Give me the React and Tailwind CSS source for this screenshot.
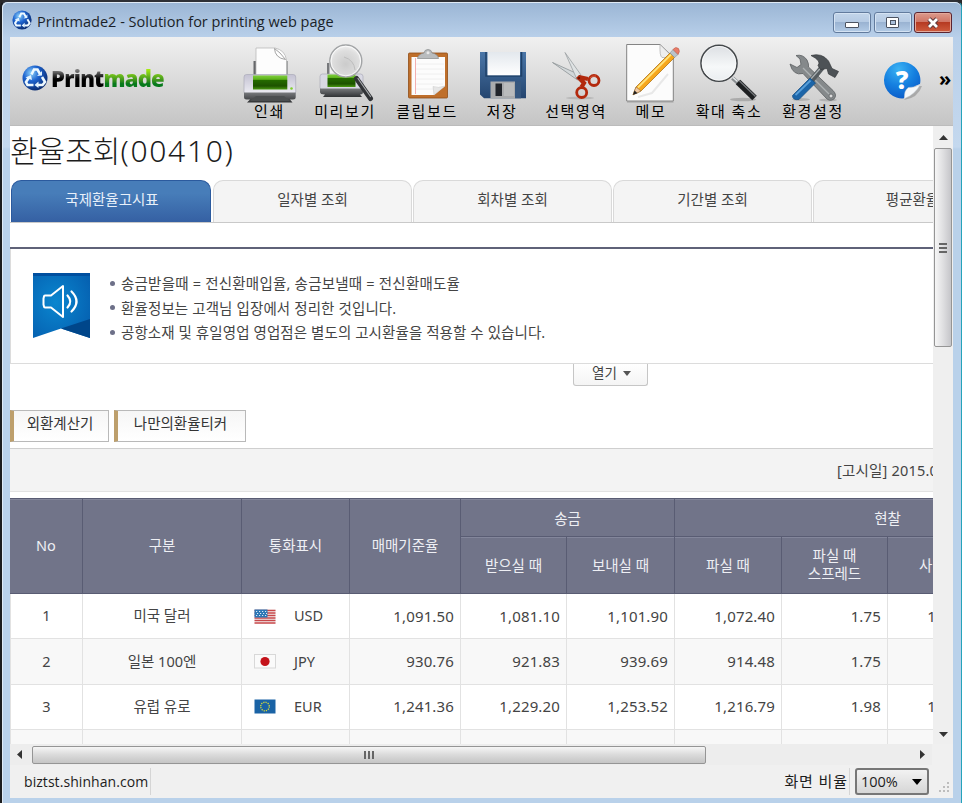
import React from "react";

const K = "font-['Noto_Sans','Noto_Sans_CJK_KR',sans-serif]";

function Globe({ size }) {
  return (
    <svg width={size} height={size} viewBox="0 0 26 26" className="block shrink-0">
      <defs>
        <radialGradient id={"globe" + size} cx="0.35" cy="0.3" r="0.8">
          <stop offset="0" stopColor="#8fd4fb" />
          <stop offset="0.4" stopColor="#1d63cf" />
          <stop offset="1" stopColor="#06215f" />
        </radialGradient>
      </defs>
      <circle cx="13" cy="13" r="12.5" fill={"url(#globe" + size + ")"} />
      <path d="M9.5 9.5 L12 4.5 H15.5 L18 9 M20 12 L23 17 L20.5 20 H16 M11.5 20 H5.5 L4 17 L7 12.5" fill="none" stroke="#eef9ff" strokeWidth="2.6" />
      <path d="M15 11 L20 10.5 L20 6 Z M16.5 16.5 V23 L12.5 20 Z M3.5 12.5 L9 10 L10 15 Z" fill="#e2f3ff" />
    </svg>
  );
}

function Icon({ box, children }) {
  return (
    <svg width="60" height="62" viewBox={box} className="block shrink-0">
      {children}
    </svg>
  );
}

function PrinterIcon() {
  return (
    <Icon box="240 42 60 62">
      <defs>
        <linearGradient id="prBody" x2="0" y2="1"><stop offset="0" stopColor="#c4c2d2" /><stop offset="1" stopColor="#efeff5" /></linearGradient>
        <linearGradient id="prGreen" x2="0" y2="1"><stop offset="0" stopColor="#7ed03a" /><stop offset="0.28" stopColor="#5cb01c" /><stop offset="0.32" stopColor="#256c00" /><stop offset="0.75" stopColor="#1d5200" /><stop offset="1" stopColor="#4a9a12" /></linearGradient>
        <linearGradient id="prBase" x2="0" y2="1"><stop offset="0" stopColor="#77797c" /><stop offset="1" stopColor="#303234" /></linearGradient>
      </defs>
      <path d="M254.5 75 V61 H258 V75 Z M285.5 75 V61 H288.5 V75 Z" fill="#66686b" />
      <path d="M257 48 H276 Q286 50 287.5 60 V76 H257 Z" fill="#fdfdfd" stroke="#b9b9b9" strokeWidth="0.8" />
      <path d="M275.5 48.5 Q276 58 286.5 59.5 Q281 52 275.5 48.5 Z" fill="#fff" stroke="#999" strokeWidth="0.9" />
      <rect x="245" y="74.5" width="51.7" height="20" rx="2.5" fill="url(#prBody)" stroke="#a5a5b3" strokeWidth="0.6" />
      <rect x="254" y="75.5" width="34.3" height="14" fill="url(#prGreen)" />
      <circle cx="292.5" cy="88.5" r="1.3" fill="#7fd02b" />
      <path d="M245 92.5 H296.7 V97 Q296.7 99.5 294 99.5 H291 L293.5 102.5 H248 L251 99.5 H247.5 Q245 99.5 245 97 Z" fill="url(#prBase)" />
      <path d="M257 96 H285 L291 101 H251 Z" fill="#4b4e50" />
    </Icon>
  );
}

function PreviewIcon() {
  return (
    <Icon box="315 42 60 62">
      <defs>
        <radialGradient id="pvLens" cx="0.5" cy="0.6" r="0.6"><stop offset="0" stopColor="#cbcbcb" /><stop offset="0.7" stopColor="#dedede" /><stop offset="1" stopColor="#f2f2f2" /></radialGradient>
      </defs>
      <path d="M327 75 V63 H330 V75 Z" fill="#77797c" />
      <rect x="329.5" y="56" width="25" height="22" fill="#f4f4f4" />
      <rect x="320" y="74" width="43" height="16" rx="2.5" fill="#d9d9e4" stroke="#a5a5b3" strokeWidth="0.6" />
      <rect x="327.5" y="74.5" width="28" height="12.5" fill="url(#prGreen)" />
      <path d="M320 88.5 H363 V92 Q363 94.5 360 94.5 L362 97 H323 L325 94.5 Q320 94.5 320 92 Z" fill="url(#prBase)" />
      <path d="M356.5 78.5 L370.5 98.5" stroke="#323437" strokeWidth="5" strokeLinecap="round" />
      <path d="M358 78.5 L370.5 96.5" stroke="#a8abae" strokeWidth="1.2" strokeLinecap="round" />
      <circle cx="345.8" cy="61" r="16" fill="url(#pvLens)" stroke="#a2a4a6" strokeWidth="1.4" />
      <path d="M344 57 Q354 60 355 70" fill="none" stroke="#bdbdbd" />
      <circle cx="345.8" cy="61" r="14.8" fill="none" stroke="#fff" strokeWidth="0.8" />
    </Icon>
  );
}

function ClipboardIcon() {
  return (
    <Icon box="397 42 60 62">
      <rect x="408.5" y="53" width="39" height="45" rx="1" fill="#bf6f2b" stroke="#8f4d17" strokeWidth="0.8" />
      <path d="M411.5 57 H445 V86 L434 95 H411.5 Z" fill="#fcfcfc" />
      <path d="M415.5 58 V94" stroke="#f2a6a6" strokeWidth="0.9" />
      <path d="M416 64 H444 M416 69 H444 M416 74 H444 M416 79 H444 M416 84 H443 M416 89 H436" stroke="#ececec" strokeWidth="0.8" />
      <path d="M445 86 L434 95 L433 86.5 Q438 88.5 445 86 Z" fill="#e6e6e6" stroke="#c4c4c4" strokeWidth="0.5" />
      <path d="M417.5 58.5 Q418 54 424 53 Q424.5 49.5 428 49.5 Q431.5 49.5 432 53 Q438 54 438.5 58.5 Z" fill="#b9bcbe" stroke="#85888a" strokeWidth="0.7" />
      <circle cx="428" cy="52.8" r="1.5" fill="#e8e8e8" />
    </Icon>
  );
}

function SaveIcon() {
  return (
    <Icon box="472 42 60 62">
      <defs>
        <linearGradient id="fdBlue" x2="0" y2="1"><stop offset="0" stopColor="#4a76a8" /><stop offset="1" stopColor="#24456f" /></linearGradient>
        <linearGradient id="fdLabel" x2="0" y2="1"><stop offset="0" stopColor="#e3e8ed" /><stop offset="1" stopColor="#fff" /></linearGradient>
      </defs>
      <path d="M480 52 H526 V98.3 H484 L480 94.5 Z" fill="url(#fdBlue)" />
      <path d="M486 52 V76 H521.5 V52" fill="none" stroke="#1f4169" strokeWidth="1.5" />
      <rect x="487.5" y="52" width="32.5" height="23.3" fill="url(#fdLabel)" />
      <rect x="490.5" y="81.5" width="24.5" height="16.8" fill="#a9abad" />
      <rect x="515" y="81.5" width="6" height="16.8" fill="#35577f" />
      <rect x="495.5" y="83.5" width="6.5" height="12.5" fill="#20242a" />
      <path d="M504 83 H514 V96 H504 Z" fill="#b9bbbc" />
    </Icon>
  );
}

function ScissorsIcon() {
  return (
    <Icon box="546 42 60 62">
      <ellipse cx="580" cy="98" rx="14" ry="1.5" fill="#000" opacity="0.12" />
      <path d="M552.5 62.5 L580 75 L577.5 80 Z" fill="#d3d8da" stroke="#8d9395" strokeWidth="0.8" />
      <path d="M565 52.5 L581 75 L577 79.5 Z" fill="#dfe3e4" stroke="#9ba0a2" strokeWidth="0.8" />
      <path d="M577.5 76.5 L584 83 L581.5 87 M579 77 L588 79" fill="none" stroke="#b3290d" strokeWidth="4.2" />
      <circle cx="594" cy="80.5" r="5" fill="none" stroke="#b3290d" strokeWidth="2.8" />
      <circle cx="581.7" cy="92.5" r="5" fill="none" stroke="#b3290d" strokeWidth="2.8" />
      <circle cx="579" cy="78" r="1.2" fill="#6b1a0a" />
      <path d="M590 78 Q592 75.5 596 76" fill="none" stroke="#e1674d" strokeWidth="0.8" />
    </Icon>
  );
}

function MemoIcon() {
  return (
    <Icon box="621 42 60 62">
      <path d="M626.7 44.5 H660 L673.3 57 V101 H626.7 Z" fill="#fcfcfc" stroke="#777" strokeWidth="0.9" />
      <path d="M627 102 H673.5" stroke="#8f8f8f" strokeWidth="0.7" />
      <path d="M660 44.5 Q659.5 56 662 57.5 L673 57.3 Z" fill="#eee" stroke="#aaa" strokeWidth="0.7" />
      <path d="M638 97 L652 93 L668 74" stroke="#000" strokeWidth="2" opacity="0.08" fill="none" />
      <path d="M633 94.8 L636 87 L670 53 L674.5 57.5 L641 91 Z" fill="#f7a71c" stroke="#a66808" strokeWidth="0.7" />
      <path d="M638 87.5 L671 54.5" stroke="#ffe37c" strokeWidth="1.8" />
      <path d="M633 94.8 L636 87 L641 91 Z" fill="#f0c9a2" stroke="#8a6642" strokeWidth="0.5" />
      <path d="M633 94.8 L634.5 90.5 L637.5 93.2 Z" fill="#222" />
      <path d="M670 53 L673 49.5 L678 54.5 L674.500 57.5 Z" fill="#b9c3cb" stroke="#7c868d" strokeWidth="0.5" />
      <path d="M673 49.5 Q675.500 46 678.500 48.500 Q680.500 51.5 678 54.5 Z" fill="#e97d69" stroke="#b65340" strokeWidth="0.5" />
    </Icon>
  );
}

function ZoomIcon() {
  return (
    <Icon box="699 42 60 62">
      <defs>
        <linearGradient id="zmLens" x2="0" y2="1"><stop offset="0" stopColor="#dcdfe3" /><stop offset="0.6" stopColor="#f6f8f9" /><stop offset="1" stopColor="#e9edf0" /></linearGradient>
      </defs>
      <ellipse cx="743" cy="99.5" rx="13" ry="1.8" fill="#000" opacity="0.18" />
      <path d="M732.5 78 L738 83" stroke="#8a8e91" strokeWidth="4" />
      <path d="M733 77.5 L737.5 81.5" stroke="#e9edef" strokeWidth="1.4" />
      <path d="M738 82 L754.5 98" stroke="#1d1f21" strokeWidth="6.5" />
      <path d="M739.5 81 L755.5 96.5" stroke="#74787b" strokeWidth="1.3" />
      <circle cx="719" cy="63.3" r="18" fill="url(#zmLens)" stroke="#44484b" strokeWidth="1.6" />
      <circle cx="719" cy="63.3" r="16.8" fill="none" stroke="#fafafa" strokeWidth="0.8" />
    </Icon>
  );
}

function ToolsIcon() {
  return (
    <Icon box="783 42 60 62">
      <ellipse cx="801" cy="99.5" rx="9" ry="1.5" fill="#000" opacity="0.15" />
      <ellipse cx="828" cy="100" rx="9" ry="1.5" fill="#000" opacity="0.15" />
      <path d="M790 64 L797 67.5 L801 64.5 L800 59 L796 55.5 Q803 54 807 60 Q809 64 808.5 67 L833 90.5 Q837.5 95 834 99 Q829.5 102 826 98 L803 73.5 Q793 76 790 64 Z" fill="#85898b" stroke="#5c6062" strokeWidth="0.8" />
      <path d="M803 68 L829 94" stroke="#aeb2b3" strokeWidth="1.3" />
      <circle cx="831" cy="96" r="2" fill="#dcdcdc" stroke="#606366" strokeWidth="0.8" />
      <path d="M811 81 L822.5 67" stroke="#555b5f" strokeWidth="5.5" />
      <path d="M810 80 L821.5 67" stroke="#a9afb2" strokeWidth="1.2" />
      <path d="M811 55.5 Q822 52.5 828.5 61 L832 68.5 L838.5 71.5 L835 77.5 L828.5 74 L827 68.5 L820.5 69.5 L818 65.5 Q822 61 811 55.5 Z" fill="#4d5256" stroke="#36393c" strokeWidth="0.7" />
      <path d="M792.5 95.5 L810 78 L815.5 83 L799 99.5 Q792.5 100.5 792.5 95.5 Z" fill="#1c65a8" stroke="#124a80" strokeWidth="0.7" />
      <path d="M795.5 95 L810.5 80.5" stroke="#589ed8" strokeWidth="1.8" />
    </Icon>
  );
}

function HelpIcon() {
  return (
    <svg width="42" height="42" viewBox="882 60 42 42" className="block shrink-0">
      <defs>
        <radialGradient id="helpBlue" cx="0.4" cy="0.2" r="0.9"><stop offset="0" stopColor="#3bb2f3" /><stop offset="0.5" stopColor="#1580e0" /><stop offset="1" stopColor="#0a55c4" /></radialGradient>
      </defs>
      <path d="M904 100 Q918 98 922 86 L915 86 Z" fill="#000" opacity="0.2" />
      <path d="M920 84 A18.200 18.200 0 1 0 904 98.300 Q907 88 920 84 Z" fill="url(#helpBlue)" />
      <path d="M920.300 84.500 Q915 94.500 904.500 98.500 Q904 90 908.500 87.500 Q914 88 920.300 84.500 Z" fill="#f6f8fa" stroke="#c4ccd4" strokeWidth="0.5" />
      <text x="902" y="88.5" textAnchor="middle" className="font-['Open_Sans',sans-serif] font-extrabold" fontSize="25" fill="#fff">?</text>
    </svg>
  );
}

const tools = [
  [PrinterIcon, "인쇄", "w-[76px]"],
  [PreviewIcon, "미리보기", "w-[75px]"],
  [ClipboardIcon, "클립보드", "w-[89px]"],
  [SaveIcon, "저장", "w-[61px]"],
  [ScissorsIcon, "선택영역", "w-[87px]"],
  [MemoIcon, "메모", "w-[63px]"],
  [ZoomIcon, "확대 축소", "w-[93px]"],
  [ToolsIcon, "환경설정", "w-[75px]"],
];

function WindowButton({ close, children }) {
  return (
    <div className={"flex h-[21px] w-[38px] items-center justify-center rounded-[3px] border " + (close
      ? "border-[#5b2430] bg-[linear-gradient(#dc9a8c_0%,#cf7464_48%,#b63a22_50%,#cf5c3e_100%)] shadow-[inset_0_0_0_1px_#e3a99b]"
      : "border-[#627b9d] bg-[linear-gradient(#c3d5ea_0%,#b5cae3_48%,#9ab3d2_50%,#b3cbe6_100%)] shadow-[inset_0_0_0_1px_#d5e3f3]")}>
      {children}
    </div>
  );
}

function TitleBar() {
  return (
    <div className="flex h-[34px] shrink-0 items-center pl-[9px] pr-[8px]">
      <Globe size={20} />
      <div className="ml-[5px] mt-[3px] whitespace-nowrap font-['Open_Sans',sans-serif] text-[14.5px] tracking-[0.02px] text-[#1a1f28]">Printmade2 - Solution for printing web page</div>
      <div className="ml-auto mt-[5px] flex gap-[2.5px] pr-[1px]">
        <WindowButton>
          <div className="mt-[4px] h-[6px] w-[14px] rounded-[1px] border border-[#4c5361] bg-white" />
        </WindowButton>
        <WindowButton>
          <div className="flex h-[11px] w-[13px] items-center justify-center rounded-[1px] border border-[#4c5361] bg-white">
            <div className="h-[5px] w-[6px] border border-[#4c5361] bg-[#a9bfda]" />
          </div>
        </WindowButton>
        <WindowButton close>
          <svg width="14" height="12" viewBox="0 0 14 12"><path d="M3 2 L11 10 M11 2 L3 10" stroke="#5c3a3d" strokeWidth="4.6" /><path d="M3 2 L11 10 M11 2 L3 10" stroke="#fff" strokeWidth="2.8" /></svg>
        </WindowButton>
      </div>
    </div>
  );
}

function Toolbar() {
  return (
    <div className="flex h-[89px] shrink-0 border-b border-[#bcbcbc] bg-gradient-to-b from-[#f0f0f0] to-[#c5c5c5]">
      <div className="flex w-[221px] shrink-0 items-center pb-[6px] pl-[12px]">
        <Globe size={26} />
        <div className="ml-[3px] flex font-['Open_Sans',sans-serif] text-[22px] font-extrabold leading-[28px] tracking-[-0.75px]">
          <span className="bg-gradient-to-b from-[#777] from-25% to-black to-60% bg-clip-text text-transparent">Print</span>
          <span className="bg-gradient-to-b from-[#a4ea10] from-20% to-[#077a1c] to-70% bg-clip-text text-transparent">made</span>
        </div>
      </div>
      {tools.map(([Glyph, label, w]) => (
        <div key={label} className={"flex shrink-0 flex-col items-center pt-[5px] " + w}>
          <Glyph />
          <div className="-mt-[2px] whitespace-nowrap pl-px font-['Noto_Sans_CJK_KR',sans-serif] text-[15px] leading-[18px] tracking-[1.6px] text-black">{label}</div>
        </div>
      ))}
      <div className="ml-[32px] flex items-center pb-[1px]"><HelpIcon /></div>
      <div className="ml-[15px] mt-[31px] font-['Noto_Sans',sans-serif] text-[20px] font-bold leading-[22px] text-black">»</div>
    </div>
  );
}

function Tab({ children, active }) {
  return (
    <div className={"flex h-[42px] shrink-0 items-center justify-center rounded-t-[10px] border border-b-0 pb-[3px] text-[14.5px] " + (active
      ? "mr-[2px] w-[200px] border-[#2b5a9e] bg-gradient-to-b from-[#477db9] from-30% to-[#3560a3] pl-[2px] text-[#e8f0fa]"
      : "mr-px w-[199px] border-[#d9d9d9] bg-[#f4f4f4] text-[#444]")}>
      {children}
    </div>
  );
}

const notices = [
  ["송금받을때 = 전신환매입율, 송금보낼때 = 전신환매도율", "tracking-[0.21px]"],
  ["환율정보는 고객님 입장에서 정리한 것입니다.", "tracking-[0.12px]"],
  ["공항소재 및 휴일영업 영업점은 별도의 고시환율을 적용할 수 있습니다.", "tracking-[0.09px]"],
];

function Notice() {
  return (
    <div className="flex h-[115px] shrink-0 border-b border-l border-[#dcdcdc] pl-[22px] pt-[24px]">
      <svg width="57" height="66" viewBox="0 0 57 66" className="block shrink-0">
        <defs>
          <radialGradient id="flagBlue" cx="0.4" cy="0.45" r="0.7"><stop offset="0" stopColor="#0a86cf" /><stop offset="1" stopColor="#0560b0" /></radialGradient>
        </defs>
        <path d="M0 0 H57 V65 L28 55.5 L0 65 Z" fill="url(#flagBlue)" />
        <path d="M57 46 L28 55.5 L57 65 Z" fill="#00468a" />
        <path d="M0 0 H57 V3 H0 Z" fill="#004f9f" />
        <path d="M11 23.5 Q11 22.5 12 22.5 H18 L30 13 V44 L18 34.5 H12 Q11 34.5 11 33.5 L10.5 31.5 V25.5 Z" fill="none" stroke="#fff" strokeWidth="2" strokeLinejoin="round" />
        <path d="M34.5 22.5 Q40 28.5 34.5 34.5 M38.5 18.5 Q48.500 28.5 38.500 38.500" fill="none" stroke="#fff" strokeWidth="2.2" strokeLinecap="round" />
      </svg>
      <ul className="-mt-[2px] ml-[20px] text-[14.5px] leading-[24.5px] text-[#444]">
        {notices.map(([line, spacing]) => (
          <li key={line} className={"flex items-center whitespace-nowrap " + spacing}>
            <span className="mr-[6px] size-[5px] rounded-full bg-[#6d7088]" />
            {line}
          </li>
        ))}
      </ul>
    </div>
  );
}

function Flag({ code }) {
  return (
    <svg width="22" height="15" viewBox="0 0 22 15" className="block shrink-0">
      {code === "USD" && (
        <>
          <rect x="0.5" y="0.5" width="21" height="14" fill="#f3f1f1" />
          <path d="M0.5 1.5 H21.5 M0.5 4 H21.5 M0.5 6.5 H21.5 M0.5 9 H21.5 M0.5 11.5 H21.5 M0.5 14 H21.5" stroke="#c8474a" strokeWidth="1.3" />
          <rect x="0.5" y="0.5" width="13" height="8" fill="#2c76b5" />
          <path d="M2 2.5 H13 M3 4.5 H13 M2 6.5 H13" stroke="#d7e7f5" strokeWidth="1" strokeDasharray="1.2 1.8" />
        </>
      )}
      {code === "JPY" && (
        <>
          <rect x="0.5" y="0.5" width="21" height="13.5" fill="#fafafa" stroke="#d8d8d8" />
          <circle cx="11" cy="7.5" r="4.6" fill="#c4121a" />
        </>
      )}
      {code === "EUR" && (
        <>
          <rect x="0.5" y="0.5" width="21" height="14" fill="#1a63a5" />
          <circle cx="11" cy="7.5" r="4.3" fill="none" stroke="#d7dc3a" strokeWidth="1.3" strokeDasharray="1.2 1.05" />
        </>
      )}
    </svg>
  );
}

const rows = [
  ["1", "미국 달러", "USD", "1,091.50", "1,081.10", "1,101.90", "1,072.40", "1.75", "1,110.60", ""],
  ["2", "일본 100엔", "JPY", "930.76", "921.83", "939.69", "914.48", "1.75", "947.04", ""],
  ["3", "유럽 유로", "EUR", "1,241.36", "1,229.20", "1,253.52", "1,216.79", "1.98", "1,265.93", ""],
  ["", "", "", "", "", "", "", "", "", ""],
];

const th = "border-r border-b border-[#595c73] p-0 font-normal shadow-[inset_0_1px_0_#83869b]";

function RateTable() {
  return (
    <table className="w-[1091px] table-fixed border-separate border-spacing-0 text-[#444]">
      <colgroup>
        <col className="w-[73px]" /><col className="w-[159px]" /><col className="w-[108px]" /><col className="w-[111px]" /><col className="w-[106px]" />
        <col className="w-[108px]" /><col className="w-[107px]" /><col className="w-[106px]" /><col className="w-[107px]" /><col className="w-[106px]" />
      </colgroup>
      <thead className="bg-[#717489] text-[14.5px] leading-[18px] text-[#eeeff4]">
        <tr className="h-[39px]">
          <th rowSpan="2" className={th + " border-t pb-[2px]"}>No</th>
          <th rowSpan="2" className={th + " border-t pb-[2px]"}>구분</th>
          <th rowSpan="2" className={th + " border-t pb-[2px]"}>통화표시</th>
          <th rowSpan="2" className={th + " border-t pb-[2px]"}>매매기준율</th>
          <th colSpan="2" className={th + " border-t"}>송금</th>
          <th colSpan="4" className={th + " border-t"}>현찰</th>
        </tr>
        <tr className="h-[57px]">
          <th className={th}>받으실 때</th>
          <th className={th}>보내실 때</th>
          <th className={th}>파실 때</th>
          <th className={th + " pb-[2px]"}>파실 때<br />스프레드</th>
          <th className={th}>사실 때</th>
          <th className={th} />
        </tr>
      </thead>
      <tbody>
        {rows.map((r, i) => (
          <tr key={i} className={"h-[45.3px] text-[14.5px] " + (i % 2 ? "bg-[#f8f8f8]" : "bg-white")}>
            {r.map((v, j) => (
              <td key={j} className={"border-r border-b border-[#e2e2e2] p-0 " + (j === 0 ? "border-l text-center" : j === 1 ? "text-center" : j === 2 ? "pl-[12px]" : "pr-[6px] text-right text-[15px] tracking-[0.15px]")}>
                {j === 2 && v ? <div className="flex items-center"><Flag code={v} /><span className="ml-[18px]">{v}</span></div> : v}
              </td>
            ))}
          </tr>
        ))}
      </tbody>
    </table>
  );
}

function Page() {
  return (
    <div className={"flex w-[923px] flex-col overflow-hidden bg-white " + K}>
      <h1 className="h-[54px] shrink-0 whitespace-nowrap text-[30px] font-light leading-[50px] text-[#1c1c1c]">환율조회<span className="tracking-[1.7px]">(00410)</span></h1>
      <div className="flex h-[43px] shrink-0 border-b border-[#c9c9c9] pl-px">
        <Tab active>국제환율고시표</Tab>
        <Tab>일자별 조회</Tab>
        <Tab>회차별 조회</Tab>
        <Tab>기간별 조회</Tab>
        <Tab>평균환율</Tab>
      </div>
      <div className="h-[26px] shrink-0 border-b-2 border-[#5f6278]" />
      <Notice />
      <div className="ml-[563px] flex h-[22px] w-[75px] shrink-0 items-center justify-center gap-[6px] rounded-b-[3px] border border-t-0 border-[#c6c6c6] bg-gradient-to-b from-white to-[#f4f4f4] pb-[2px] pl-[2px] text-[13.5px] text-[#444]">
        열기
        <span className="border-x-4 border-t-[5px] border-x-transparent border-t-[#555]" />
      </div>
      <div className="mt-[24px] flex h-[32px] shrink-0 gap-[5px] text-[14.5px] text-[#333]">
        <div className="flex w-[99px] items-center justify-center border border-l-4 border-[#b9b9b9] border-l-[#bd9f6c] bg-gradient-to-b from-[#f6f6f6] to-white pb-[4px] pr-[2px]">외환계산기</div>
        <div className="flex w-[132px] items-center justify-center border border-l-4 border-[#b9b9b9] border-l-[#bd9f6c] bg-gradient-to-b from-[#f6f6f6] to-white pb-[4px] pr-[2px]">나만의환율티커</div>
      </div>
      <div className="mt-[6px] h-[44px] shrink-0 whitespace-nowrap border-y border-t-[#cfcfcf] border-b-[#e2e2e2] bg-[#f3f3f3] pl-[827px] text-[14.5px] leading-[43px] tracking-[0.2px] text-[#444]">[고시일] 2015.04.09</div>
      <div className="mt-[6px]"><RateTable /></div>
    </div>
  );
}

function VScroll() {
  return (
    <div className="flex w-[20px] flex-col items-center bg-[#efefef]">
      <svg width="9" height="5" viewBox="0 0 9 5" className="mt-[9px] block"><path d="M4.500 0 L9 5 H0 Z" fill="#333" /></svg>
      <div className="mt-[8px] flex h-[199px] w-[18px] flex-col items-center justify-center gap-[2px] rounded-[2px] border border-[#959595] bg-gradient-to-r from-[#f6f6f6] via-[#dfdfe1] to-[#c5c5c9]">
        <div className="h-[2px] w-[8px] bg-[#666]" />
        <div className="h-[2px] w-[8px] bg-[#666]" />
        <div className="h-[2px] w-[8px] bg-[#666]" />
      </div>
      <svg width="9" height="5" viewBox="0 0 9 5" className="mb-[7px] mt-auto block"><path d="M0 0 H9 L4.500 5 Z" fill="#333" /></svg>
    </div>
  );
}

function HScroll() {
  return (
    <div className="flex h-[21px] w-[922px] shrink-0 items-center bg-[#ededed]">
      <svg width="5" height="9" viewBox="0 0 5 9" className="ml-[7px] block"><path d="M5 0 V9 L0 4.500 Z" fill="#333" /></svg>
      <div className="ml-[10px] flex h-[18px] w-[674px] items-center justify-center gap-[2px] rounded-[2px] border border-[#959595] bg-gradient-to-b from-[#f6f6f6] via-[#dadada] to-[#c5c5c5]">
        <div className="h-[8px] w-[2px] bg-[#666]" />
        <div className="h-[8px] w-[2px] bg-[#666]" />
        <div className="h-[8px] w-[2px] bg-[#666]" />
      </div>
      <svg width="5" height="9" viewBox="0 0 5 9" className="ml-auto mr-[7px] block"><path d="M0 0 L5 4.500 L0 9 Z" fill="#333" /></svg>
    </div>
  );
}

function StatusBar() {
  return (
    <div className="flex h-[33px] shrink-0 items-center bg-[#f0f0f0] font-['Open_Sans','Noto_Sans_CJK_KR',sans-serif] text-[14px] text-[#1c1c1c]">
      <div className="flex h-[27px] w-[141px] items-center whitespace-nowrap border-r border-[#d5d5d5] pl-[14px] tracking-[0.06px]">biztst.shinhan.com</div>
      <div className="ml-auto flex h-[27px] items-center whitespace-nowrap border-r border-[#d5d5d5] pr-px text-[15px] tracking-[0.9px]">화면 비율</div>
      <div className="ml-[5px] flex h-[27px] w-[74px] items-center justify-between rounded-[3px] border-2 border-[#777] bg-gradient-to-b from-[#f2f2f2] to-[#d6d6d6] pl-[4px] pr-[5px] text-[14.5px]">
        100%
        <span className="border-x-[5px] border-t-[6px] border-x-transparent border-t-black" />
      </div>
      <svg width="22" height="27" viewBox="0 0 22 27" className="block">
        <path d="M18 14 h2 v2 h-2 Z M14 18 h2 v2 h-2 Z M18 18 h2 v2 h-2 Z M10 22 h2 v2 h-2 Z M14 22 h2 v2 h-2 Z M18 22 h2 v2 h-2 Z" fill="#bdbdbd" />
      </svg>
      <div className="w-[2px]" />
    </div>
  );
}

export default function App() {
  return (
    <div className="h-[803px] w-[962px] overflow-hidden bg-[#2a2a2c]">
      <div className="flex h-[803px] w-[962px] flex-col rounded-t-[7px] border-l-2 border-r border-t-2 border-l-[#1c1c1e] border-r-[#25a3bb] border-t-[#2e3036] bg-[linear-gradient(#9ab5d4_0px,#b9d0ea_36px,#c4d8ee_145px,#b9d1ea_147px)]">
        <div className="flex h-full flex-col rounded-t-[6px] border-l border-t border-[#dfeaf5]">
          <TitleBar />
          <div className="ml-[7px] flex h-[760px] w-[943px] flex-col bg-[#f0f0f0]">
            <Toolbar />
            <div className="flex h-[618px] shrink-0">
              <Page />
              <VScroll />
            </div>
            <HScroll />
            <StatusBar />
          </div>
        </div>
      </div>
    </div>
  );
}
